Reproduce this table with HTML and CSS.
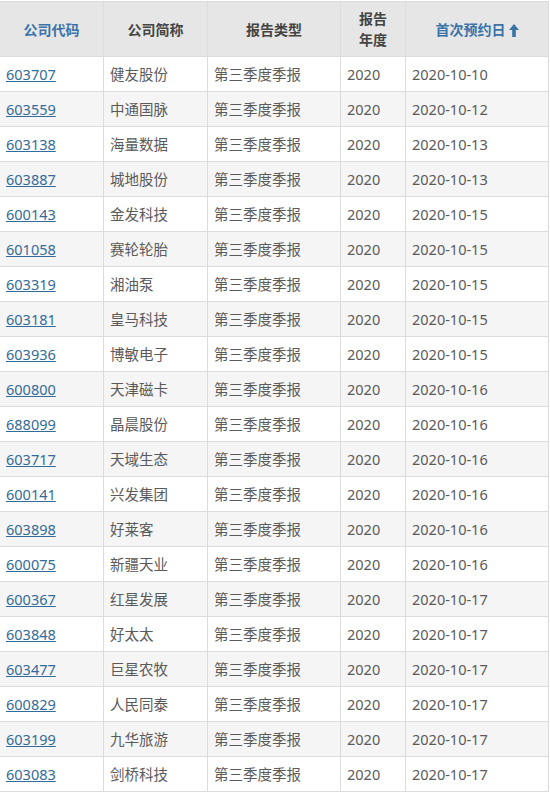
FILE: index.html
```html
<!DOCTYPE html>
<html lang="zh">
<head>
<meta charset="utf-8">
<link rel="stylesheet" href="styles.css">
</head>
<body>
<table class="grid">
  <colgroup>
    <col class="c1"><col class="c2"><col class="c3"><col class="c4"><col class="c5">
  </colgroup>
  <thead>
    <tr>
      <th class="sortable">公司代码</th>
      <th>公司简称</th>
      <th>报告类型</th>
      <th>报告<br>年度</th>
      <th class="sortable">首次预约日<svg class="arrow" viewBox="0 0 10 13" width="10" height="13"><path d="M5 0 L10 6 H6.8 V13 H3.2 V6 H0 Z" fill="#3a73a8"/></svg></th>
    </tr>
  </thead>
  <tbody>
    <tr><td><a href="#">603707</a></td><td>健友股份</td><td>第三季度季报</td><td>2020</td><td>2020-10-10</td></tr>
    <tr><td><a href="#">603559</a></td><td>中通国脉</td><td>第三季度季报</td><td>2020</td><td>2020-10-12</td></tr>
    <tr><td><a href="#">603138</a></td><td>海量数据</td><td>第三季度季报</td><td>2020</td><td>2020-10-13</td></tr>
    <tr><td><a href="#">603887</a></td><td>城地股份</td><td>第三季度季报</td><td>2020</td><td>2020-10-13</td></tr>
    <tr><td><a href="#">600143</a></td><td>金发科技</td><td>第三季度季报</td><td>2020</td><td>2020-10-15</td></tr>
    <tr><td><a href="#">601058</a></td><td>赛轮轮胎</td><td>第三季度季报</td><td>2020</td><td>2020-10-15</td></tr>
    <tr><td><a href="#">603319</a></td><td>湘油泵</td><td>第三季度季报</td><td>2020</td><td>2020-10-15</td></tr>
    <tr><td><a href="#">603181</a></td><td>皇马科技</td><td>第三季度季报</td><td>2020</td><td>2020-10-15</td></tr>
    <tr><td><a href="#">603936</a></td><td>博敏电子</td><td>第三季度季报</td><td>2020</td><td>2020-10-15</td></tr>
    <tr><td><a href="#">600800</a></td><td>天津磁卡</td><td>第三季度季报</td><td>2020</td><td>2020-10-16</td></tr>
    <tr><td><a href="#">688099</a></td><td>晶晨股份</td><td>第三季度季报</td><td>2020</td><td>2020-10-16</td></tr>
    <tr><td><a href="#">603717</a></td><td>天域生态</td><td>第三季度季报</td><td>2020</td><td>2020-10-16</td></tr>
    <tr><td><a href="#">600141</a></td><td>兴发集团</td><td>第三季度季报</td><td>2020</td><td>2020-10-16</td></tr>
    <tr><td><a href="#">603898</a></td><td>好莱客</td><td>第三季度季报</td><td>2020</td><td>2020-10-16</td></tr>
    <tr><td><a href="#">600075</a></td><td>新疆天业</td><td>第三季度季报</td><td>2020</td><td>2020-10-16</td></tr>
    <tr><td><a href="#">600367</a></td><td>红星发展</td><td>第三季度季报</td><td>2020</td><td>2020-10-17</td></tr>
    <tr><td><a href="#">603848</a></td><td>好太太</td><td>第三季度季报</td><td>2020</td><td>2020-10-17</td></tr>
    <tr><td><a href="#">603477</a></td><td>巨星农牧</td><td>第三季度季报</td><td>2020</td><td>2020-10-17</td></tr>
    <tr><td><a href="#">600829</a></td><td>人民同泰</td><td>第三季度季报</td><td>2020</td><td>2020-10-17</td></tr>
    <tr><td><a href="#">603199</a></td><td>九华旅游</td><td>第三季度季报</td><td>2020</td><td>2020-10-17</td></tr>
    <tr><td><a href="#">603083</a></td><td>剑桥科技</td><td>第三季度季报</td><td>2020</td><td>2020-10-17</td></tr>
  </tbody>
</table>
</body>
</html>
```

FILE: styles.css
```css
html, body {
  margin: 0;
  padding: 0;
  background: #ffffff;
}
body {
  padding-top: 1px;
  font-family: "Noto Sans", "Noto Sans CJK SC", sans-serif;
  font-size: 14.5px;
  color: #5a5a5a;
}
.grid {
  border-collapse: collapse;
  table-layout: fixed;
  width: 549px;
  margin-left: -1px;
}
.c1 { width: 104px; }
.c2 { width: 104px; }
.c3 { width: 133px; }
.c4 { width: 65px; }
.c5 { width: 143px; }
.grid th, .grid td {
  border: 1px solid #dcdcdc;
  padding: 0 6px;
  white-space: nowrap;
  overflow: hidden;
}
.grid th {
  height: 54px;
  background: #e6e6e6;
  font-family: "Noto Sans CJK SC", sans-serif;
  font-size: 14px;
  font-weight: bold;
  color: #444444;
  text-align: center;
  line-height: 21px;
}
.grid th.sortable {
  color: #3a73a8;
}
.arrow {
  vertical-align: -2px;
  margin-left: 3px;
}
.grid td {
  height: 34px;
  text-align: left;
  line-height: 20px;
}
.grid tbody tr:nth-child(even) td {
  background: #f5f5f5;
}
.grid td a {
  color: #336b99;
  text-decoration: underline;
}
```
